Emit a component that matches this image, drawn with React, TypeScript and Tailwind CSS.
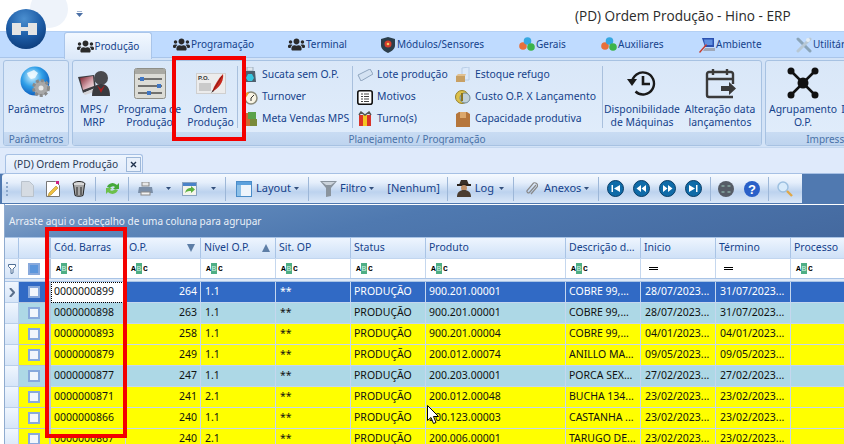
import { FaUsers } from "react-icons/fa";

const FONT = "[font-family:'Noto_Sans',sans-serif]";
const COLS =
  "grid grid-cols-[14px_32px_75px_75px_75px_75px_75px_140px_75px_75px_75px_60px]";

const ROWS = [
  { bg: "sel", cod: "0000000899", op: "264", niv: "1.1", prod: "900.201.00001", desc: "COBRE 99,...", ini: "28/07/2023...", fim: "31/07/2023..." },
  { bg: "blue", cod: "0000000898", op: "263", niv: "1.1", prod: "900.201.00001", desc: "COBRE 99,...", ini: "28/07/2023...", fim: "31/07/2023..." },
  { bg: "yellow", cod: "0000000893", op: "258", niv: "1.1", prod: "900.201.00004", desc: "COBRE 99,...", ini: "04/01/2023...", fim: "04/01/2023..." },
  { bg: "yellow", cod: "0000000879", op: "249", niv: "1.1", prod: "200.012.00074", desc: "ANILLO MA...", ini: "09/05/2023...", fim: "09/05/2023..." },
  { bg: "blue", cod: "0000000877", op: "247", niv: "1.1", prod: "200.203.00001", desc: "PORCA SEX...", ini: "27/02/2023...", fim: "27/02/2023..." },
  { bg: "yellow", cod: "0000000871", op: "241", niv: "2.1", prod: "200.012.00048", desc: "BUCHA 134...", ini: "23/02/2023...", fim: "23/02/2023..." },
  { bg: "yellow", cod: "0000000866", op: "240", niv: "1.1", prod: "200.123.00003", desc: "CASTANHA ...", ini: "23/02/2023...", fim: "23/02/2023..." },
  { bg: "yellow", cod: "0000000867", op: "240", niv: "2.1", prod: "200.006.00001", desc: "TARUGO DE...", ini: "23/02/2023...", fim: "23/02/2023..." },
];

const Logo = () => (
  <svg width="44" height="44" viewBox="0 0 44 44">
    <defs>
      <radialGradient id="lg" cx="45%" cy="25%" r="80%">
        <stop offset="0" stopColor="#4b8fd0" />
        <stop offset="0.55" stopColor="#1d5ca6" />
        <stop offset="1" stopColor="#0c3a78" />
      </radialGradient>
    </defs>
    <circle cx="22" cy="22" r="20" fill="url(#lg)" />
    <path d="M8 16h9v4h7v-4h9v12h-9v-4h-7v4H8z" fill="#e4e4e4" />
  </svg>
);

const ParamIcon = () => (
  <svg width="32" height="34" viewBox="0 0 32 34">
    <defs>
      <radialGradient id="gl" cx="40%" cy="35%" r="70%">
        <stop offset="0" stopColor="#d8f4ff" />
        <stop offset="0.5" stopColor="#2f9fe8" />
        <stop offset="1" stopColor="#0a55b8" />
      </radialGradient>
    </defs>
    <circle cx="15" cy="15" r="14.5" fill="url(#gl)" />
    <path d="M7 7l7-3 4 3-3 5-4 1-3-3zM15 17l5 1 1 6-4 2z" fill="#f4fbff" opacity="0.85" />
    <circle cx="21" cy="22" r="7.5" fill="#a8a8a8" stroke="#8a8a8a" strokeWidth="3" strokeDasharray="3 2" />
    <circle cx="21" cy="22" r="2.5" fill="#e8e8e8" />
  </svg>
);

const MpsIcon = () => (
  <svg width="32" height="25" viewBox="0 0 32 25">
    <defs>
      <linearGradient id="scr" x1="0" y1="0" x2="1" y2="1">
        <stop offset="0" stopColor="#7a1c28" />
        <stop offset="0.6" stopColor="#d8a8b0" />
        <stop offset="1" stopColor="#f4f0f0" />
      </linearGradient>
    </defs>
    <path d="M0 6l16-2 2 13-13 5z" fill="#3c3c40" />
    <path d="M2 7l13-2 1 10-11 4z" fill="url(#scr)" />
    <path d="M5 22l12-5 2 3-12 4z" fill="#d4d4d8" />
    <circle cx="23" cy="7" r="7" fill="#4a4a4e" />
    <path d="M14 25c0-8 3-12 9-12s9 4 9 12z" fill="#3a3a3e" />
    <path d="M19 14l4 4 4-4-4 8z" fill="#a82020" />
  </svg>
);

const SlidersIcon = () => (
  <svg width="32" height="31" viewBox="0 0 32 31">
    <rect x="0.5" y="0.5" width="31" height="30" rx="2" fill="#dcdcd6" stroke="#8f8f88" />
    <rect x="1" y="1" width="30" height="5" fill="#a9a9a3" />
    <path d="M4 11h24M4 18h24M4 25h24" stroke="#4d4d4d" strokeWidth="1.5" />
    <rect x="6" y="9" width="4" height="4" fill="#3f76c4" />
    <rect x="23" y="16" width="4" height="4" fill="#3f76c4" />
    <rect x="13" y="23" width="4" height="4" fill="#3f76c4" />
  </svg>
);

const OrdemIcon = () => (
  <svg width="30" height="21" viewBox="0 0 30 21">
    <rect x="0" y="0" width="30" height="21" fill="#cfcfcf" />
    <rect x="1" y="1" width="28" height="19" fill="#ececec" />
    <text x="2" y="7" fontSize="6" fontWeight="700" fill="#333" fontFamily="Liberation Sans">P.O.</text>
    <path d="M3 11h12M3 13h12M3 15h12M3 17h12" stroke="#a8a8a8" />
    <path d="M16 19c2-6 6-13 11-18 1 5-2 12-8 16z" fill="#c8281e" />
    <path d="M17 18L26 3" stroke="#7a1410" strokeWidth="0.8" />
    <path d="M15 20l2-3 1 1z" fill="#333" />
  </svg>
);

const BinIcon = () => (
  <svg width="14" height="16" viewBox="0 0 14 16">
    <rect x="4" y="0" width="6" height="4" fill="#dfe7ee" stroke="#9fb0bf" />
    <path d="M2 4h10l1 11H1z" fill="#4d5f6e" />
    <path d="M5 7h4l2 4-2 3H5l-2-3z" fill="#36c6e0" />
  </svg>
);

const TurnIcon = () => (
  <svg width="16" height="16" viewBox="0 0 16 16">
    <circle cx="9" cy="9" r="6" fill="#f8f4e4" stroke="#8a8a7a" strokeWidth="1.5" />
    <path d="M9 9l3-3M9 9v3" stroke="#333" />
    <path d="M1 9l4-6 2 1-4 6z" fill="#e9a030" />
  </svg>
);

const MetaIcon = () => (
  <svg width="16" height="16" viewBox="0 0 16 16">
    <rect x="1" y="2" width="9" height="13" fill="#cc6a34" />
    <rect x="6" y="1" width="8" height="7" fill="#5aa24a" />
    <rect x="8" y="8" width="7" height="7" fill="#7a8a3a" />
  </svg>
);

const TagIcon = () => (
  <svg width="16" height="12" viewBox="0 0 16 12">
    <path d="M1 6L13 0l3 5L4 12z" fill="#d4e2f2" stroke="#8fa5be" />
  </svg>
);

const ListIcon = () => (
  <svg width="16" height="15" viewBox="0 0 16 15">
    <rect x="0.8" y="0.8" width="14.4" height="13.4" rx="2" fill="#fff" stroke="#111" strokeWidth="1.6" />
    <path d="M4 4h2M7 4h5M4 6.5h2M7 6.5h5M4 9h2M7 9h5M4 11.5h2M7 11.5h5" stroke="#444" />
  </svg>
);

const GiftIcon = () => (
  <svg width="14" height="16" viewBox="0 0 14 16">
    <path d="M1 4h12v11H1z" fill="#d9342a" />
    <path d="M5 4h4v11H5z" fill="#f3c623" />
    <path d="M1 4l2-3 4 3 4-3 2 3" fill="none" stroke="#555" strokeWidth="1.5" />
  </svg>
);

const StockIcon = () => (
  <svg width="16" height="16" viewBox="0 0 16 16">
    <path d="M7 1l7-1v13H7z" fill="#dbe9fa" stroke="#b8cde6" />
    <path d="M1 9h9v6H1z" fill="#c8a064" />
    <path d="M1 9l2-2h8l-1 2z" fill="#e0c090" />
  </svg>
);

const CoinIcon = () => (
  <svg width="16" height="16" viewBox="0 0 16 16">
    <circle cx="7" cy="8" r="6.5" fill="#dcc04a" stroke="#96802a" />
    <circle cx="10" cy="9" r="5" fill="#c0d0d8" stroke="#708a96" />
    <path d="M7 4v8" stroke="#8a7420" strokeWidth="2" />
  </svg>
);

const CapIcon = () => (
  <svg width="14" height="15" viewBox="0 0 14 15">
    <path d="M0 2l3-2h8l3 2v13H0z" fill="#b5763c" />
    <path d="M4 0h6v6H4z" fill="#dca86c" />
  </svg>
);

const HistoryIcon = () => (
  <svg width="30" height="30" viewBox="0 0 30 30" fill="none" stroke="#1a1a1a" strokeWidth="2.4">
    <path d="M5 15a11 11 0 1 1 3.5 8.5" />
    <path d="M0 11h10l-5 7z" fill="#1a1a1a" stroke="none" />
    <path d="M16 8v8h7" strokeWidth="2.6" />
  </svg>
);

const CalendarIcon = () => (
  <svg width="31" height="31" viewBox="0 0 31 31" fill="none" stroke="#3a3a3a" strokeWidth="2.4">
    <path d="M28 16V6a2 2 0 0 0-2-2H4a2 2 0 0 0-2 2v21a2 2 0 0 0 2 2h24" />
    <path d="M8 1v6M22 1v6M2 11h26" />
    <path d="M16 18h8v-4l7 6.5-7 6.5v-4h-8z" fill="#3a3a3a" stroke="none" />
  </svg>
);

const NetworkIcon = () => (
  <svg width="32" height="32" viewBox="0 0 32 32" fill="#111" stroke="#111" strokeWidth="2.6">
    <path d="M4 4l12 12L28 4M4 28l12-12 12 12" fill="none" />
    <circle cx="16" cy="16" r="5.5" stroke="none" />
    <circle cx="4" cy="4" r="3.5" stroke="none" />
    <circle cx="28" cy="4" r="3.5" stroke="none" />
    <circle cx="4" cy="28" r="3.5" stroke="none" />
    <circle cx="28" cy="28" r="3.5" stroke="none" />
  </svg>
);

const ModIcon = () => (
  <svg width="16" height="16" viewBox="0 0 16 16">
    <path d="M8 0l7 2v6c0 4-3 6-7 8-4-2-7-4-7-8V2z" fill="#2c3e4a" />
    <circle cx="8" cy="7" r="3.5" fill="#d43c2c" />
    <circle cx="8" cy="7" r="1.3" fill="#f2d060" />
  </svg>
);

const GeraisIcon = () => (
  <svg width="16" height="15" viewBox="0 0 16 15">
    <circle cx="4" cy="9" r="3.8" fill="#e8703a" />
    <circle cx="8.5" cy="4" r="3.8" fill="#36a8e0" />
    <circle cx="12" cy="10" r="3.8" fill="#3cb44a" />
  </svg>
);

const AmbIcon = () => (
  <svg width="16" height="16" viewBox="0 0 16 16">
    <path d="M3 1h12v9H6z" fill="#2a50b0" />
    <path d="M5 2.5h8.5V8H6z" fill="#6090e0" />
    <path d="M0 15L7 7l1 1-7 8z" fill="#c83a2a" />
    <path d="M6 11h10v3H4z" fill="#a0a8b8" />
  </svg>
);

const UtilIcon = () => (
  <svg width="16" height="16" viewBox="0 0 16 16" fill="none" strokeLinecap="round">
    <path d="M2 2l12 12" stroke="#8aa4b8" strokeWidth="3" />
    <path d="M14 2L2 14" stroke="#b8c8d4" strokeWidth="3" />
    <circle cx="12" cy="3" r="2" fill="#e4edf4" />
  </svg>
);

const TabIcon = ({ name }: { name: string }) => {
  if (name === "mod") return <ModIcon />;
  if (name === "ger") return <GeraisIcon />;
  if (name === "amb") return <AmbIcon />;
  if (name === "uti") return <UtilIcon />;
  return <FaUsers className="w-[17px] h-[17px] text-[#2a2a2a]" />;
};

const TABS = [
  { label: "Programação", icon: "usr", cls: "w-[136px] pl-[21px]" },
  { label: "Terminal", icon: "usr", cls: "w-[92px]" },
  { label: "Módulos/Sensores", icon: "mod", cls: "w-[139px]" },
  { label: "Gerais", icon: "ger", cls: "w-[82px]" },
  { label: "Auxiliares", icon: "ger", cls: "w-[98px]" },
  { label: "Ambiente", icon: "amb", cls: "w-[97px]" },
  { label: "Utilitários", icon: "uti", cls: "w-[100px]" },
];

const BigBtn = ({ icon, l1, l2, cls }: { icon: React.ReactNode; l1: string; l2?: string; cls: string }) => (
  <div className={`${cls} flex flex-col items-center shrink-0 h-[71px]`}>
    <div className="h-[42px] flex items-center justify-center pt-[2px]">{icon}</div>
    <div className="text-[10.4px] leading-[13px] text-center whitespace-nowrap text-[#15428b]">
      <div>{l1}</div>
      {l2 && <div>{l2}</div>}
    </div>
  </div>
);

const SmallBtn = ({ icon, label }: { icon: React.ReactNode; label: string }) => (
  <div className="flex items-center h-[22px] whitespace-nowrap text-[10.4px] text-[#15428b]">
    <span className="w-[16px] flex justify-center shrink-0">{icon}</span>
    <span className="ml-[4px]">{label}</span>
  </div>
);

const RibbonSep = () => <div className="w-px h-[62px] mt-[5px] bg-[#a9c0dd] shrink-0" />;

const Group = ({ label, cls, children }: { label: string; cls: string; children: React.ReactNode }) => (
  <div className={`${cls} shrink-0 h-[86px] rounded-[3px] border border-[#a7c2e2] flex flex-col overflow-hidden bg-[linear-gradient(#d9e7f8,#e1edfb)]`}>
    <div className="flex flex-1">{children}</div>
    <div className="h-[15px] text-[10px] leading-[14px] text-center text-[#4a72a8] whitespace-nowrap bg-[linear-gradient(#c9dcf3,#bdd3ee)]">
      {label}
    </div>
  </div>
);

const Caret = ({ color = "#33507c" }: { color?: string }) => (
  <svg width="5" height="3" viewBox="0 0 5 3" className="shrink-0">
    <path d="M0 0h5L2.5 3z" fill={color} />
  </svg>
);

const ToolSep = ({ cls }: { cls: string }) => <div className={`${cls} w-px h-[24px] bg-[#9db7d8] shrink-0`} />;

const NavBtn = ({ d, cls }: { d: string; cls: string }) => (
  <svg width="17" height="17" viewBox="0 0 17 17" className={`${cls} shrink-0`}>
    <circle cx="8.5" cy="8.5" r="8" fill="#0f6ba8" stroke="#0a3d66" />
    <path d={d} fill="#fff" />
  </svg>
);

const AbcIcon = () => (
  <span className="flex items-center text-[8px] leading-[11px] font-bold text-black [font-family:'Liberation_Mono',monospace]">
    <span className="w-[5px]">A</span>
    <span className="w-[6px] h-[11px] bg-[#4fae84] text-center font-normal text-[#cfeee0]">B</span>
    <span className="w-[5px] ml-[1px]">C</span>
  </span>
);

const EqIcon = () => (
  <span className="ml-[3px] flex flex-col gap-[1px]">
    <span className="block w-[9px] h-px bg-black" />
    <span className="block w-[9px] h-px bg-black" />
  </span>
);

const HEAD = ["Cód. Barras", "O.P.", "Nível O.P.", "Sit. OP", "Status", "Produto", "Descrição d...", "Inicio", "Término", "Processo"];

const HeadCell = ({ label }: { label: string }) => (
  <div className="relative flex items-center h-[20px] pl-[3px] border-r border-[#a9c4e6] whitespace-nowrap overflow-hidden text-[#15428b]">
    {label}
    {label === "O.P." && (
      <svg width="8" height="8" viewBox="0 0 8 8" className="absolute right-[5px] top-[6px]">
        <path d="M0 0h8L4 8z" fill="#5d7ea6" />
      </svg>
    )}
    {label === "Nível O.P." && (
      <svg width="8" height="8" viewBox="0 0 8 8" className="absolute right-[5px] top-[6px]">
        <path d="M0 8h8L4 0z" fill="#5d7ea6" />
      </svg>
    )}
  </div>
);

const GridRow = ({ row }: { row: (typeof ROWS)[number] }) => {
  const sel = row.bg === "sel";
  const bg = sel ? "bg-[#316ac5] text-white" : row.bg === "blue" ? "bg-[#add8e6] text-[#111]" : "bg-[#ffff00] text-[#111]";
  const cell = `${bg} h-[21px] flex items-center border-r border-b border-[#c5d7ee] whitespace-nowrap overflow-hidden`;
  return (
    <div className={COLS}>
      <div className="h-[21px] flex items-center justify-center border-r border-b border-[#b9cfea] bg-[linear-gradient(#f0f6fe,#d6e5f8)]">
        {sel && (
          <svg width="6" height="9" viewBox="0 0 6 9">
            <path d="M1 0l4 4.5L1 9" fill="none" stroke="#5a6f8c" strokeWidth="2" />
          </svg>
        )}
      </div>
      <div className={`${bg} h-[21px] flex items-center pl-[9px] border-r-2 border-b border-[#b6c6dc]`}>
        <span className="block w-[12px] h-[12px] border-2 border-[#88a9dc] bg-[#f2f6fc]" />
      </div>
      <div className={`${cell} pl-[3px] ${sel ? "bg-white! text-[#111]! outline outline-dotted outline-black -outline-offset-1" : ""}`}>{row.cod}</div>
      <div className={`${cell} justify-end pr-[3px]`}>{row.op}</div>
      <div className={`${cell} pl-[4px]`}>{row.niv}</div>
      <div className={`${cell} pl-[4px]`}>**</div>
      <div className={`${cell} pl-[3px]`}>PRODUÇÃO</div>
      <div className={`${cell} pl-[3px]`}>{row.prod}</div>
      <div className={`${cell} pl-[3px]`}>{row.desc}</div>
      <div className={`${cell} pl-[4px]`}>{row.ini}</div>
      <div className={`${cell} pl-[4px]`}>{row.fim}</div>
      <div className={cell} />
    </div>
  );
};

export default function App() {
  return (
    <div className={`${FONT} relative w-[844px] h-[444px] overflow-hidden bg-white text-[10.5px]`}>
      {/* barra de titulo */}
      <div className="relative h-[31px] bg-white">
        <div className="absolute left-[30px] -top-[10px] w-[38px] h-[38px] rounded-full bg-[#eef3fa]" />
        <div className="absolute left-[76px] top-[11px]">
          <svg width="7" height="6" viewBox="0 0 7 6">
            <path d="M1 0h5" stroke="#4a6fa5" />
            <path d="M0 2h7L3.5 6z" fill="#4a6fa5" />
          </svg>
        </div>
        <div className="absolute left-[575px] top-[6px] text-[13.6px] leading-[19px] text-[#2a2a2a] whitespace-nowrap [font-family:'Open_Sans',sans-serif]">
          (PD) Ordem Produção - Hino - ERP
        </div>
      </div>
      <div className="absolute left-[4px] top-[7px] z-10">
        <Logo />
      </div>

      {/* abas */}
      <div className="flex h-[27px] pl-[64px] bg-[#bfdbff] border-t border-[#b4d0f4] border-b border-b-[#a9c5ea] text-[#15428b] text-[10px]">
        <div className="w-[88px] h-[27px] shrink-0 flex items-center justify-center gap-[1px] rounded-t-[3px] border border-b-0 border-[#a9c5ea] bg-[linear-gradient(#f2f8ff,#dbe8f9)]">
          <FaUsers className="w-[17px] h-[17px] text-[#2a2a2a]" />
          Produção
        </div>
        {TABS.map((t) => (
          <div key={t.label} className={`${t.cls} shrink-0 flex items-center gap-[1px] whitespace-nowrap`}>
            <TabIcon name={t.icon} />
            {t.label}
          </div>
        ))}
      </div>

      {/* ribbon */}
      <div className="flex gap-[3px] h-[89px] pl-[3px] pt-[2px] bg-[#d3e3f7]">
        <Group label="Parâmetros" cls="w-[66px]">
          <BigBtn icon={<ParamIcon />} l1="Parâmetros" cls="w-[64px]" />
        </Group>
        <Group label="Planejamento / Programação" cls="w-[690px]">
          <BigBtn icon={<MpsIcon />} l1="MPS /" l2="MRP" cls="w-[42px]" />
          <BigBtn icon={<SlidersIcon />} l1="Programa de" l2="Produção" cls="w-[69px]" />
          <BigBtn icon={<OrdemIcon />} l1="Ordem" l2="Produção" cls="w-[53px]" />
          <RibbonSep />
          <div className="w-[114px] shrink-0 pt-[3px] pl-[4px]">
            <SmallBtn icon={<BinIcon />} label="Sucata sem O.P." />
            <SmallBtn icon={<TurnIcon />} label="Turnover" />
            <SmallBtn icon={<MetaIcon />} label="Meta Vendas MPS" />
          </div>
          <RibbonSep />
          <div className="w-[100px] shrink-0 pt-[3px] pl-[4px]">
            <SmallBtn icon={<TagIcon />} label="Lote produção" />
            <SmallBtn icon={<ListIcon />} label="Motivos" />
            <SmallBtn icon={<GiftIcon />} label="Turno(s)" />
          </div>
          <div className="w-[149px] shrink-0 pt-[3px] pl-[2px]">
            <SmallBtn icon={<StockIcon />} label="Estoque refugo" />
            <SmallBtn icon={<CoinIcon />} label="Custo O.P. X Lançamento" />
            <SmallBtn icon={<CapIcon />} label="Capacidade produtiva" />
          </div>
          <RibbonSep />
          <BigBtn icon={<HistoryIcon />} l1="Disponibilidade" l2="de Máquinas" cls="w-[78px]" />
          <BigBtn icon={<CalendarIcon />} l1="Alteração data" l2="lançamentos" cls="w-[78px]" />
        </Group>
        <Group label="Impressão" cls="w-[132px]">
          <BigBtn icon={<NetworkIcon />} l1="Agrupamento" l2="O.P." cls="w-[74px]" />
          <BigBtn icon={<span className="block h-[32px]" />} l1="Impressão" l2="de O.P." cls="w-[50px] ml-[2px]" />
        </Group>
      </div>

      {/* aba do documento */}
      <div className="h-[26px] bg-[#dfeafb] pt-[6px] pl-[5px] border-t border-[#c5d8f0]">
        <div className="w-[138px] h-[20px] flex items-center pl-[8px] rounded-t-[3px] border border-b-0 border-[#a6c0e4] bg-[linear-gradient(#eef5fe,#dfeafb)] text-[#2a3a55] text-[10.2px]">
          <span className="whitespace-nowrap">(PD) Ordem Produção</span>
          <span className="ml-auto mr-[1px] w-[15px] h-[15px] shrink-0 flex items-center justify-center border border-[#9db7d8] bg-[#e8f0fb]">
            <svg width="7" height="7" viewBox="0 0 7 7">
              <path d="M1 1l5 5M6 1L1 6" stroke="#22344f" strokeWidth="1.4" />
            </svg>
          </span>
        </div>
      </div>

      {/* barra de ferramentas */}
      <div className="h-[31px] bg-[#5079b0] border-t border-[#a6c0e4]">
        <div className="w-[800px] h-[29px] ml-[2px] flex items-center rounded-tl-[3px] text-[#15428b] text-[11px] whitespace-nowrap bg-[linear-gradient(#f6faff_0%,#e4eefb_30%,#bcd2ee_62%,#dbe8f8_100%)]">
          <span className="ml-[4px] flex flex-col gap-[2px]">
            <span className="block w-[2px] h-[2px] bg-[#8ba7cb]" />
            <span className="block w-[2px] h-[2px] bg-[#8ba7cb]" />
            <span className="block w-[2px] h-[2px] bg-[#8ba7cb]" />
            <span className="block w-[2px] h-[2px] bg-[#8ba7cb]" />
          </span>
          <svg width="13" height="16" viewBox="0 0 13 16" className="ml-[13px] shrink-0">
            <path d="M0.5 0.5h8l4 4v11H.5z" fill="#d5dbe2" stroke="#b9c2cc" />
          </svg>
          <svg width="14" height="16" viewBox="0 0 14 16" className="ml-[12px] shrink-0">
            <path d="M0.5 0.5h9l4 4v11H.5z" fill="#fff" stroke="#777" />
            <path d="M3 12l7-7 2 2-7 7-3 1z" fill="#f0c040" stroke="#9a7a20" strokeWidth="0.5" />
            <rect x="10" y="0" width="3" height="3" fill="#d02080" />
          </svg>
          <svg width="14" height="16" viewBox="0 0 14 16" className="ml-[12px] shrink-0">
            <ellipse cx="7" cy="3" rx="6" ry="2.5" fill="#d8d8d8" stroke="#222" />
            <path d="M1.5 4l1.5 10.5c2 1 6 1 8 0L12.5 4" fill="#a8a8a8" stroke="#222" />
            <path d="M5 6v8M9 6v8" stroke="#222" />
          </svg>
          <ToolSep cls="ml-[9px]" />
          <svg width="15" height="15" viewBox="0 0 15 15" className="ml-[9px] shrink-0">
            <path d="M2 6a6 6 0 0 1 10-2l2-2v6H8l2-2a3.5 3.5 0 0 0-5 1z" fill="#45a83a" />
            <path d="M13 9a6 6 0 0 1-10 2l-2 2V7h6L5 9a3.5 3.5 0 0 0 5-1z" fill="#6cc04a" />
          </svg>
          <ToolSep cls="ml-[8px]" />
          <svg width="15" height="14" viewBox="0 0 15 14" className="ml-[9px] shrink-0">
            <rect x="4" y="0" width="7" height="4" fill="#e8e8e8" stroke="#8a8a8a" />
            <path d="M1 5h13l1 6H0z" fill="#7a8ea8" />
            <rect x="3" y="10" width="9" height="3" fill="#f2f2f2" stroke="#8a8a8a" />
          </svg>
          <span className="ml-[13px]"><Caret /></span>
          <svg width="15" height="14" viewBox="0 0 15 14" className="ml-[11px] shrink-0">
            <rect x="0.5" y="0.5" width="14" height="13" fill="#f4f4ec" stroke="#8aa4c0" />
            <rect x="1" y="1" width="13" height="3" fill="#4a82c8" />
            <path d="M3 11c1-4 3-5 6-5V4l4 3.5-4 3.5V9c-2 0-4 0-6 2z" fill="#5cb040" />
          </svg>
          <span className="ml-[14px]"><Caret /></span>
          <ToolSep cls="ml-[9px]" />
          <svg width="16" height="16" viewBox="0 0 16 16" className="ml-[10px] shrink-0">
            <rect x="0.5" y="0.5" width="15" height="15" fill="#eef4fb" stroke="#4a8cc8" />
            <rect x="1" y="1" width="14" height="3" fill="#5ca0dc" />
            <rect x="1" y="4" width="4" height="11" fill="#8cc0e8" />
          </svg>
          <span className="ml-[4px]">Layout</span>
          <span className="ml-[3px]"><Caret /></span>
          <ToolSep cls="ml-[9px]" />
          <svg width="17" height="16" viewBox="0 0 17 16" className="ml-[11px] shrink-0">
            <path d="M0 0h17l-6 7v8l-5 1V7z" fill="#8a949e" />
            <path d="M2 1h13l-4 3H6z" fill="#ccd4dc" />
          </svg>
          <span className="ml-[3px]">Filtro</span>
          <span className="ml-[3px]"><Caret /></span>
          <span className="ml-[13px]">[Nenhum]</span>
          <ToolSep cls="ml-[7px]" />
          <svg width="16" height="17" viewBox="0 0 16 17" className="ml-[8px] shrink-0">
            <path d="M3 5h10l-2-5H5z" fill="#3a3028" />
            <rect x="1" y="4" width="14" height="2" fill="#2a221c" />
            <circle cx="8" cy="8" r="3" fill="#c09068" />
            <path d="M1 17c0-5 3-7 7-7s7 2 7 7z" fill="#4a3c30" />
          </svg>
          <span className="ml-[3px]">Log</span>
          <span className="ml-[5px]"><Caret /></span>
          <ToolSep cls="ml-[9px]" />
          <svg width="13" height="15" viewBox="0 0 13 15" fill="none" className="ml-[11px] shrink-0">
            <path d="M11 4L4.5 11.5a1.6 1.6 0 0 1-2.4-2L8.5 2a3 3 0 0 1 4 3.5L6 13" stroke="#888" strokeWidth="1.2" />
          </svg>
          <span className="ml-[6px]">Anexos</span>
          <span className="ml-[3px]"><Caret /></span>
          <ToolSep cls="ml-[9px]" />
          <NavBtn cls="ml-[8px]" d="M4.5 5h1.5v7H4.5zM13 5v7L7 8.5z" />
          <NavBtn cls="ml-[9px]" d="M3.5 8.5L8 5v7zM8.5 8.5L13 5v7z" />
          <NavBtn cls="ml-[9px]" d="M13.5 8.5L9 5v7zM8.5 8.5L4 5v7z" />
          <NavBtn cls="ml-[9px]" d="M12.5 5H11v7h1.5zM4 5v7l6-3.5z" />
          <ToolSep cls="ml-[8px]" />
          <svg width="16" height="16" viewBox="0 0 16 16" className="ml-[7px] shrink-0">
            <circle cx="8" cy="8" r="8" fill="#565c66" />
            <path d="M3.5 5h3M9.5 5h3M3.5 11h3M9.5 11h3" stroke="#9fd0c0" strokeWidth="1.2" />
          </svg>
          <svg width="16" height="16" viewBox="0 0 16 16" className="ml-[10px] shrink-0">
            <circle cx="8" cy="8" r="8" fill="#2a60c8" />
            <text x="8" y="13" fontSize="13" fontWeight="700" textAnchor="middle" fill="#fff" fontFamily="Liberation Sans">?</text>
          </svg>
          <ToolSep cls="ml-[8px]" />
          <svg width="16" height="16" viewBox="0 0 16 16" className="ml-[8px] shrink-0">
            <circle cx="6" cy="6" r="5" fill="#d8ebfb" stroke="#9dc0e0" strokeWidth="1.5" />
            <path d="M10 10l5 5" stroke="#e0a848" strokeWidth="2.4" />
          </svg>
        </div>
      </div>

      {/* grid */}
      <div className="ml-[4px] border-l border-[#8fabcf] bg-white">
        <div className="h-[33px] flex items-end pb-[8px] pl-[4px] border-t border-white text-[10px] text-[#eaf0f8] bg-[linear-gradient(168deg,#8ba8cd_0%,#5e87ba_22%,#4f79b0_45%,#44699f_100%)]">
          Arraste aqui o cabeçalho de uma coluna para agrupar
        </div>
        <div className={`${COLS} bg-[linear-gradient(#eef5fe,#cfe1f7)] border-t border-[#a9c4e6]`}>
          <div className="h-[20px] border-r border-[#a9c4e6]" />
          <div className="h-[20px] border-r-2 border-[#a9c4e6]" />
          {HEAD.map((h) => (
            <HeadCell key={h} label={h} />
          ))}
        </div>
        <div className={`${COLS} h-[20px] bg-white border-t border-[#c2d6ef]`}>
          <div className="flex items-center justify-center bg-[linear-gradient(#f0f6fe,#d6e5f8)] border-r border-[#b9cfea]">
            <svg width="8" height="10" viewBox="0 0 8 10">
              <path d="M0.5 0.5h7v2L5 5v4L3 9.5V5L.5 2.5z" fill="#fff" stroke="#4f6f96" />
            </svg>
          </div>
          <div className="flex items-center pl-[9px] border-r-2 border-[#b6c6dc]">
            <span className="block w-[12px] h-[12px] border-2 border-[#88a9dc] bg-[#5c96dc]" />
          </div>
          {HEAD.map((h) => (
            <div key={h} className="flex items-center pl-[5px] border-r border-[#c5d7ee]">
              {h === "Inicio" || h === "Término" ? <EqIcon /> : <AbcIcon />}
            </div>
          ))}
        </div>
        <div className="h-[4px] border-t border-b border-[#a9c4e6] bg-[#dde8f7]" />
        {ROWS.map((r) => (
          <GridRow key={r.cod} row={r} />
        ))}
      </div>

      {/* marcacoes vermelhas */}
      <div className="absolute left-[172px] top-[56px] w-[74px] h-[85px] border-[4px] border-[#f40000] pointer-events-none" />
      <div className="absolute left-[45px] top-[227px] w-[82px] h-[211px] border-[4px] border-[#f40000] pointer-events-none" />

      {/* cursor */}
      <svg width="12" height="20" viewBox="0 0 12 20" className="absolute left-[427px] top-[405px]">
        <path d="M0.5 0.5v15l3.5-3 2.5 6 2.5-1-2.5-6h5z" fill="#fff" stroke="#000" />
      </svg>
    </div>
  );
}
